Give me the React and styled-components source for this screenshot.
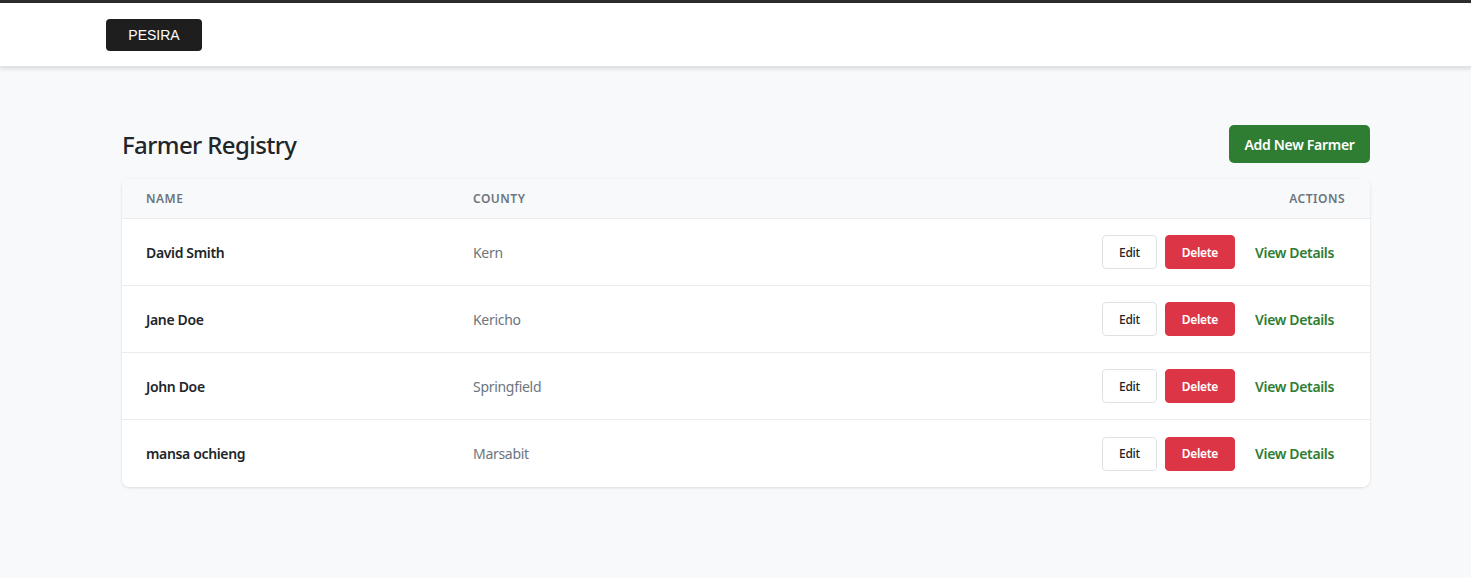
import React from 'react';
import styled, {createGlobalStyle} from 'styled-components';

const GlobalStyle = createGlobalStyle`
  html, body {
    margin: 0;
    padding: 0;
    background: #f8f9fa;
    font-family: 'Noto Sans', 'Open Sans', sans-serif;
  }
  * {
    box-sizing: border-box;
  }
`;

const Page = styled.div`
  min-height: 578px;
  border-top: 3px solid #2d2d2f;
`;

const Header = styled.header`
  height: 64px;
  background: #fff;
  display: flex;
  align-items: center;
  padding-left: 106px;
  box-shadow: 0 2px 4px rgba(0, 0, 0, 0.12);
  border-bottom: 1px solid #e2e2e6;
`;

const Brand = styled.button`
  width: 96px;
  height: 32px;
  border: none;
  border-radius: 4px;
  background: #1e1e1e;
  color: #fff;
  font-family: 'Liberation Sans', Arial, sans-serif;
  font-size: 14px;
  cursor: pointer;
`;

const Main = styled.main`
  padding: 58px 101px 0 122px;
`;

const TitleRow = styled.div`
  display: flex;
  align-items: center;
  justify-content: space-between;
  margin-bottom: 16px;
`;

const Title = styled.h1`
  margin: 0;
  font-size: 24px;
  font-weight: 500;
  letter-spacing: -0.6px;
  color: #212529;
`;

const PrimaryButton = styled.button`
  width: 141px;
  height: 38px;
  border: none;
  border-radius: 5px;
  background: #2e7d32;
  color: #fff;
  font-family: inherit;
  font-size: 14px;
  font-weight: 600;
  letter-spacing: -0.3px;
  cursor: pointer;
`;

const Card = styled.div`
  background: #fff;
  border-radius: 8px;
  box-shadow: 0 1px 3px rgba(0, 0, 0, 0.12);
  overflow: hidden;
`;

const Row = styled.div`
  display: grid;
  grid-template-columns: 327px 1fr auto;
  align-items: center;
  padding: 0 24px;
  height: ${(p) => (p.$head ? '40px' : '67px')};
  background: ${(p) => (p.$head ? '#f8f9fa' : '#fff')};
  border-bottom: ${(p) => (p.$last ? 'none' : '1px solid #e9ecef')};
  & > *:first-child {
    padding-right: 24px;
  }
`;

const HeadCell = styled.div`
  font-size: 12px;
  font-weight: 600;
  letter-spacing: 0.5px;
  text-transform: uppercase;
  color: #6c757d;
  text-align: ${(p) => (p.$right ? 'right' : 'left')};
  padding-right: ${(p) => (p.$right ? '1px' : '0')};
`;

const NameCell = styled.div`
  font-size: 14px;
  font-weight: 600;
  letter-spacing: -0.35px;
  color: #212529;
`;

const CountyCell = styled.div`
  font-size: 14px;
  letter-spacing: -0.3px;
  color: #6c757d;
`;

const Actions = styled.div`
  display: flex;
  align-items: center;
  gap: 8px;
`;

const SmallButton = styled.button`
  height: 34px;
  padding: 0 16px;
  border-radius: 4px;
  font-family: inherit;
  font-size: 12px;
  letter-spacing: -0.3px;
  font-weight: ${(p) => (p.$danger ? 600 : 500)};
  border: 1px solid ${(p) => (p.$danger ? '#dc3545' : '#dee2e6')};
  background: ${(p) => (p.$danger ? '#dc3545' : '#fff')};
  color: ${(p) => (p.$danger ? '#fff' : '#212529')};
  cursor: pointer;
`;

const LinkButton = styled.button`
  border: none;
  background: none;
  padding: 8px 12px;
  font-family: inherit;
  font-size: 14px;
  font-weight: 600;
  letter-spacing: -0.35px;
  color: #2e7d32;
  cursor: pointer;
`;

const farmers = [
  {id: 1, name: 'David Smith', county: 'Kern'},
  {id: 2, name: 'Jane Doe', county: 'Kericho'},
  {id: 3, name: 'John Doe', county: 'Springfield'},
  {id: 4, name: 'mansa ochieng', county: 'Marsabit'},
];

export default function App() {
  return (
    <Page>
      <GlobalStyle />
      <Header>
        <Brand>PESIRA</Brand>
      </Header>
      <Main>
        <TitleRow>
          <Title>Farmer Registry</Title>
          <PrimaryButton>Add New Farmer</PrimaryButton>
        </TitleRow>
        <Card>
          <Row $head>
            <HeadCell>Name</HeadCell>
            <HeadCell>County</HeadCell>
            <HeadCell $right>Actions</HeadCell>
          </Row>
          {farmers.map((f, i) => (
            <Row key={f.id} $last={i === farmers.length - 1}>
              <NameCell>{f.name}</NameCell>
              <CountyCell>{f.county}</CountyCell>
              <Actions>
                <SmallButton>Edit</SmallButton>
                <SmallButton $danger>Delete</SmallButton>
                <LinkButton>View Details</LinkButton>
              </Actions>
            </Row>
          ))}
        </Card>
      </Main>
    </Page>
  );
}
